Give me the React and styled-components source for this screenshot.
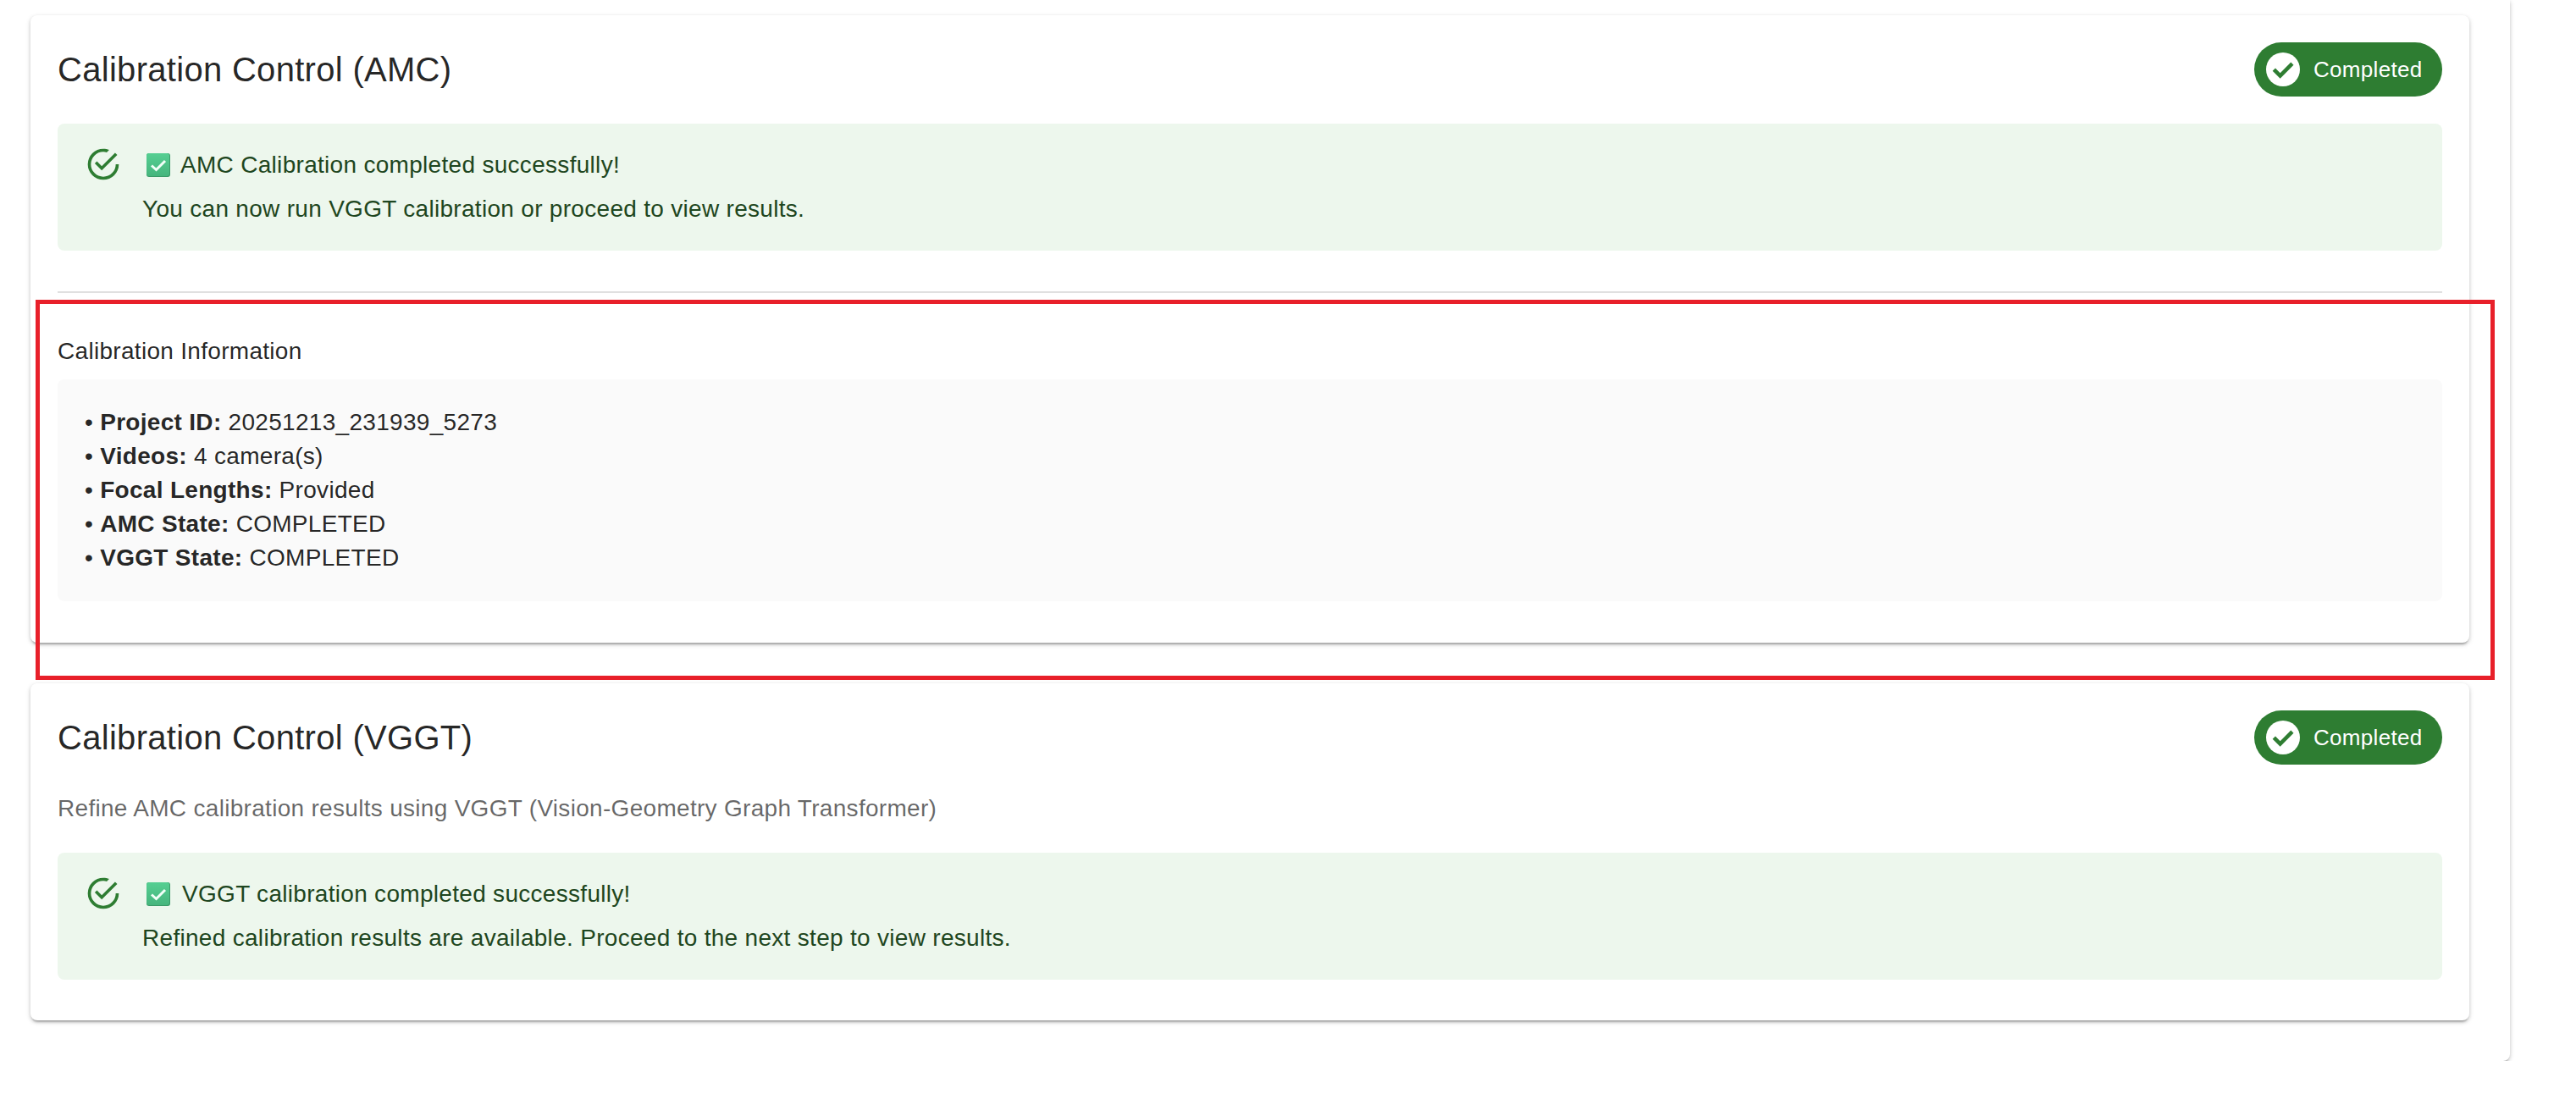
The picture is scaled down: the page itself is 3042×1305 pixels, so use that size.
import React from 'react';
import styled, { createGlobalStyle } from 'styled-components';

const GlobalStyle = createGlobalStyle`
  html, body {
    margin: 0;
    background: #fff;
    font-family: "Liberation Sans", Arial, sans-serif;
  }
`;

const elevation = `
  box-shadow: 0 4px 2px -2px rgba(0, 0, 0, 0.2), 0 2px 4px 0 rgba(0, 0, 0, 0.14), 0 2px 6px 0 rgba(0, 0, 0, 0.12);
`;

const Panel = styled.div`
  position: relative;
  width: 2964px;
  box-sizing: border-box;
  padding: 18px 48px 48px 36px;
  display: flex;
  flex-direction: column;
  gap: 48px;
  background: #fff;
  border-radius: 0 0 8px 0;
  ${elevation}
`;

const Card = styled.section`
  background: #fff;
  border-radius: 8px;
  padding: 32px 32px ${p => p.$bottom}px;
  ${elevation}
`;

const Header = styled.div`
  display: flex;
  justify-content: space-between;
  align-items: center;
  margin-bottom: ${p => p.$gap}px;
`;

const Title = styled.h2`
  margin: 0;
  font-size: 40px;
  font-weight: 400;
  line-height: 64px;
  letter-spacing: 0.3px;
  color: rgba(0, 0, 0, 0.87);
`;

const Chip = styled.div`
  width: 222px;
  height: 64px;
  box-sizing: border-box;
  padding-left: 14px;
  display: flex;
  align-items: center;
  gap: 16px;
  border-radius: 32px;
  background: #2e7d32;
  color: #fff;
  font-size: 26px;
  letter-spacing: 0.3px;
`;

const Subtitle = styled.p`
  margin: 0 0 31px;
  font-size: 28px;
  line-height: 42px;
  letter-spacing: 0.3px;
  color: rgba(0, 0, 0, 0.6);
`;

const Alert = styled.div`
  display: flex;
  padding: 12px 32px;
  border-radius: 8px;
  background: #edf7ed;
  color: #1e4620;
`;

const AlertIcon = styled.svg`
  flex: none;
  width: 44px;
  height: 44px;
  margin: 14px 24px 0 0;
  fill: #2e7d32;
`;

const AlertBody = styled.div`
  padding: 16px 0;
  font-size: 28px;
  line-height: 42px;
  letter-spacing: 0.3px;
`;

const AlertLine = styled.div`
  display: flex;
  align-items: center;
  margin-bottom: 10px;
`;

const Emoji = styled.svg`
  flex: none;
  width: 28px;
  height: 28px;
  margin: 0 ${p => p.$after}px 0 5px;
`;

const Divider = styled.hr`
  margin: 48px 0;
  border: 0;
  height: 2px;
  background: #e0e0e0;
`;

const SectionLabel = styled.div`
  margin-bottom: 12px;
  font-size: 28px;
  line-height: 42px;
  letter-spacing: 0.3px;
  color: rgba(0, 0, 0, 0.87);
`;

const InfoBox = styled.div`
  padding: 31px 32px;
  border-radius: 8px;
  background: #fafafa;
`;

const InfoRow = styled.div`
  font-size: 28px;
  line-height: 40px;
  letter-spacing: 0.3px;
  color: rgba(0, 0, 0, 0.87);
`;

const Highlight = styled.div`
  position: absolute;
  left: 42px;
  top: 354px;
  width: 2904px;
  height: 449px;
  box-sizing: border-box;
  border: 5px solid #e8202a;
  pointer-events: none;
`;

const SUCCESS_PATH =
  'M20,12A8,8 0 0,1 12,20A8,8 0 0,1 4,12A8,8 0 0,1 12,4C12.76,4 13.5,4.11 14.2,4.31L15.77,2.74C14.61,2.26 13.34,2 12,2A10,10 0 0,0 2,12A10,10 0 0,0 12,22A10,10 0 0,0 22,12M7.91,10.08L6.5,11.5L11,16L21,6L19.59,4.58L11,13.17L7.91,10.08Z';

const CheckBadge = () => (
  <svg width="40" height="40" viewBox="0 0 24 24">
    <circle cx="12" cy="12" r="12" fill="#fff" />
    <path d="M4.6 13l2-1.9 3.4 3.4 7.6-7.6 1.9 1.9-9.5 9.6z" fill="#2e7d32" />
  </svg>
);

const CompletedChip = () => (
  <Chip>
    <CheckBadge />
    Completed
  </Chip>
);

const EmojiCheck = ({ id, after }) => (
  <Emoji viewBox="0 0 28 28" $after={after}>
    <defs>
      <linearGradient id={id} x1="0" y1="0" x2="0" y2="1">
        <stop offset="0" stopColor="#55cf92" />
        <stop offset="1" stopColor="#46b57d" />
      </linearGradient>
    </defs>
    <rect width="28" height="28" rx="3" fill="#3a9a68" />
    <rect width="27" height="27" rx="3" fill={`url(#${id})`} />
    <path d="M6 14.5l5.5 5L22 9" fill="none" stroke="#f2fff8" strokeWidth="3" />
  </Emoji>
);

const SuccessAlert = ({ id, after, title, detail }) => (
  <Alert>
    <AlertIcon viewBox="0 0 24 24">
      <path d={SUCCESS_PATH} />
    </AlertIcon>
    <AlertBody>
      <AlertLine>
        <EmojiCheck id={id} after={after} />
        {title}
      </AlertLine>
      <div>{detail}</div>
    </AlertBody>
  </Alert>
);

const info = [
  ['Project ID:', '20251213_231939_5273'],
  ['Videos:', '4 camera(s)'],
  ['Focal Lengths:', 'Provided'],
  ['AMC State:', 'COMPLETED'],
  ['VGGT State:', 'COMPLETED'],
];

const App = () => (
  <>
    <GlobalStyle />
    <Panel>
      <Card $bottom={49}>
        <Header $gap={32}>
          <Title>Calibration Control (AMC)</Title>
          <CompletedChip />
        </Header>
        <SuccessAlert
          id="emoji-amc"
          after={12}
          title="AMC Calibration completed successfully!"
          detail="You can now run VGGT calibration or proceed to view results."
        />
        <Divider />
        <SectionLabel>Calibration Information</SectionLabel>
        <InfoBox>
          {info.map(([label, value]) => (
            <InfoRow key={label}>
              • <strong>{label}</strong> {value}
            </InfoRow>
          ))}
        </InfoBox>
      </Card>
      <Card $bottom={48}>
        <Header $gap={31}>
          <Title>Calibration Control (VGGT)</Title>
          <CompletedChip />
        </Header>
        <Subtitle>Refine AMC calibration results using VGGT (Vision-Geometry Graph Transformer)</Subtitle>
        <SuccessAlert
          id="emoji-vggt"
          after={14}
          title="VGGT calibration completed successfully!"
          detail="Refined calibration results are available. Proceed to the next step to view results."
        />
      </Card>
      <Highlight />
    </Panel>
  </>
);

export default App;
